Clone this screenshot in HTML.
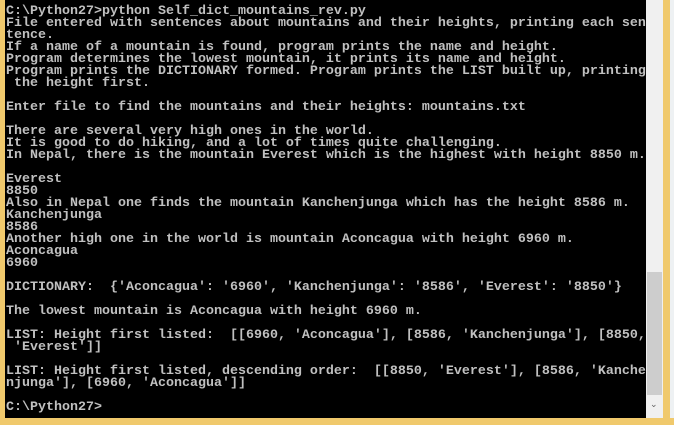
<!DOCTYPE html>
<html><head><meta charset="utf-8"><style>
html,body{margin:0;padding:0;width:674px;height:425px;overflow:hidden;background:#f0c96c;}
#con{position:absolute;left:5px;top:0;width:641px;height:418px;background:#000;overflow:hidden;}
pre{margin:0;position:absolute;left:1px;top:6px;font-family:"Liberation Mono",monospace;font-size:13.33px;line-height:12px;color:#c0c0c0;font-weight:bold;white-space:pre;}
#sb{position:absolute;left:646px;top:0;width:17px;height:418px;background:#f0f0f0;}
#th{position:absolute;left:1px;top:272px;width:15px;height:123px;background:#cdcdcd;}
#ar{position:absolute;left:4px;top:400px;font:9px "DejaVu Sans",sans-serif;color:#606060;}
#rp{position:absolute;left:670px;top:0;width:4px;height:418px;background:#eef1f3;}
</style></head><body>
<div id="con"><pre>C:\Python27&gt;python Self_dict_mountains_rev.py
File entered with sentences about mountains and their heights, printing each sen
tence.
If a name of a mountain is found, program prints the name and height.
Program determines the lowest mountain, it prints its name and height.
Program prints the DICTIONARY formed. Program prints the LIST built up, printing
 the height first.

Enter file to find the mountains and their heights: mountains.txt

There are several very high ones in the world.
It is good to do hiking, and a lot of times quite challenging.
In Nepal, there is the mountain Everest which is the highest with height 8850 m.

Everest
8850
Also in Nepal one finds the mountain Kanchenjunga which has the height 8586 m.
Kanchenjunga
8586
Another high one in the world is mountain Aconcagua with height 6960 m.
Aconcagua
6960

DICTIONARY:  {'Aconcagua': '6960', 'Kanchenjunga': '8586', 'Everest': '8850'}

The lowest mountain is Aconcagua with height 6960 m.

LIST: Height first listed:  [[6960, 'Aconcagua'], [8586, 'Kanchenjunga'], [8850,
 'Everest']]

LIST: Height first listed, descending order:  [[8850, 'Everest'], [8586, 'Kanche
njunga'], [6960, 'Aconcagua']]

C:\Python27&gt;</pre></div>
<div id="sb"><div id="th"></div><div id="ar">&#8964;</div></div>
<div id="rp"></div>
</body></html>
